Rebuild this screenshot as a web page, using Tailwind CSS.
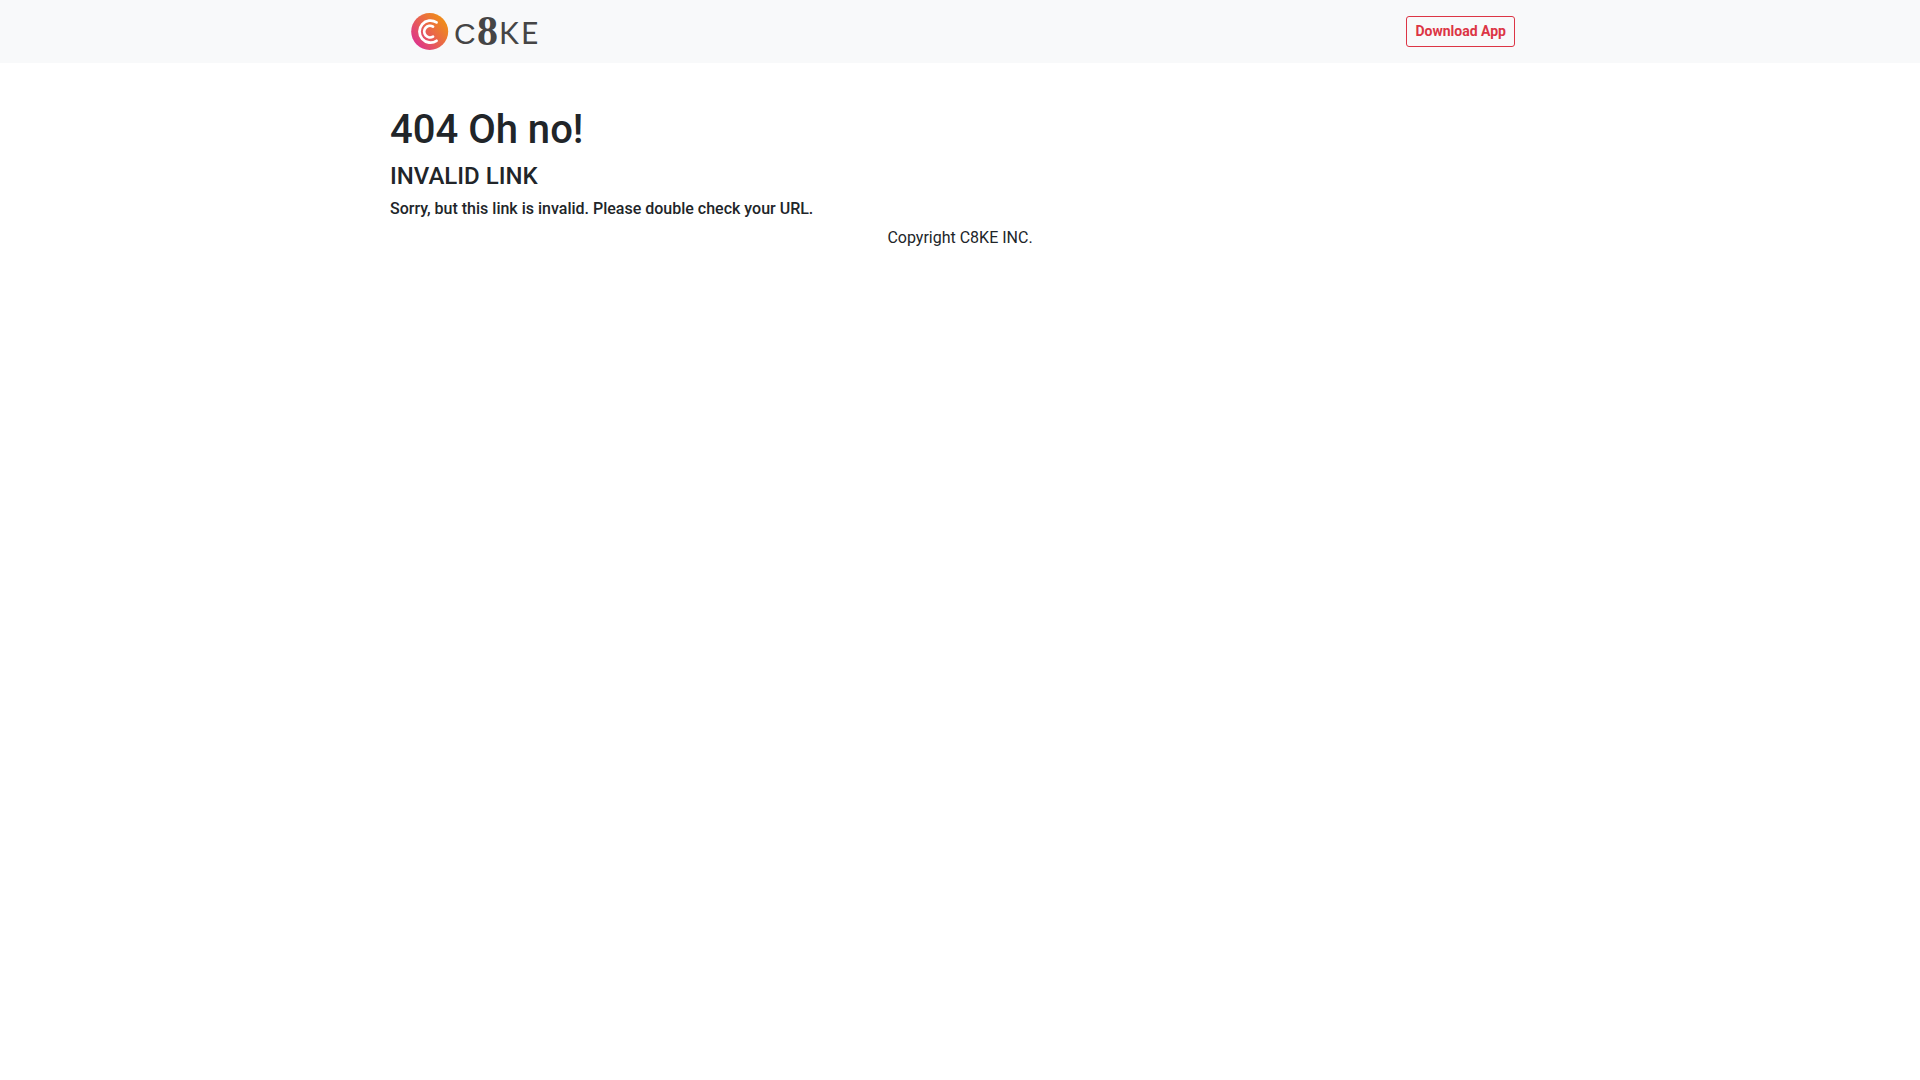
<!DOCTYPE html>
<html lang="en">
<head>
<meta charset="utf-8">
<meta name="viewport" content="width=device-width, initial-scale=1">
<title>C8KE</title>
<script src="https://cdn.jsdelivr.net/npm/@tailwindcss/browser@4"></script>
</head>
<body class="bg-white font-['Roboto',sans-serif] text-base text-[#212529]">
<header class="bg-[#f8f9fa]">
  <nav class="mx-auto flex h-[63px] max-w-[1140px] items-center justify-between px-[15px]">
    <a href="#" aria-label="C8KE home">
      <svg class="block h-[63px] w-[140px]" viewBox="0 0 140 63">
        <defs>
          <linearGradient id="badge" x1="0" y1="1" x2="1" y2="0.2">
            <stop offset="0.1" stop-color="#dc2f93"/>
            <stop offset="0.6" stop-color="#ea6a45"/>
            <stop offset="0.9" stop-color="#ef8a1d"/>
          </linearGradient>
        </defs>
        <circle cx="24.7" cy="31.5" r="18.5" fill="url(#badge)"/>
        <g fill="none" stroke="#fff" stroke-width="2.8" stroke-linecap="round">
          <path d="M31.5 22.4A11 11 0 1 0 31.5 40.8"/>
          <path d="M28 26.6A5.8 5.8 0 1 0 28 36.6"/>
        </g>
        <g fill="#454545" font-family="Lato, sans-serif" font-size="30">
          <text x="49" y="44" font-family="'Liberation Sans', sans-serif">C</text>
          <text x="72" y="45" font-family="'Liberation Serif', serif" font-size="42" font-weight="700">8</text>
          <text x="94" y="44">K</text>
          <text x="116" y="44">E</text>
        </g>
      </svg>
    </a>
    <button type="button" class="h-[31px] rounded-[3px] border border-[#dc3545] px-2 pb-0.5 text-sm leading-5 font-bold text-[#dc3545]">Download App</button>
  </nav>
</header>
<main class="mx-auto max-w-[1140px] pt-[43px]">
  <h1 class="mb-2 text-[40px] leading-12 font-medium">404 Oh no!</h1>
  <h2 class="mb-2 text-2xl leading-[29px] font-medium">INVALID LINK</h2>
  <p class="mb-2 leading-[19px] font-medium">Sorry, but this link is invalid. Please double check your URL.</p>
</main>
<footer class="text-center leading-6">Copyright C8KE INC.</footer>
</body>
</html>
